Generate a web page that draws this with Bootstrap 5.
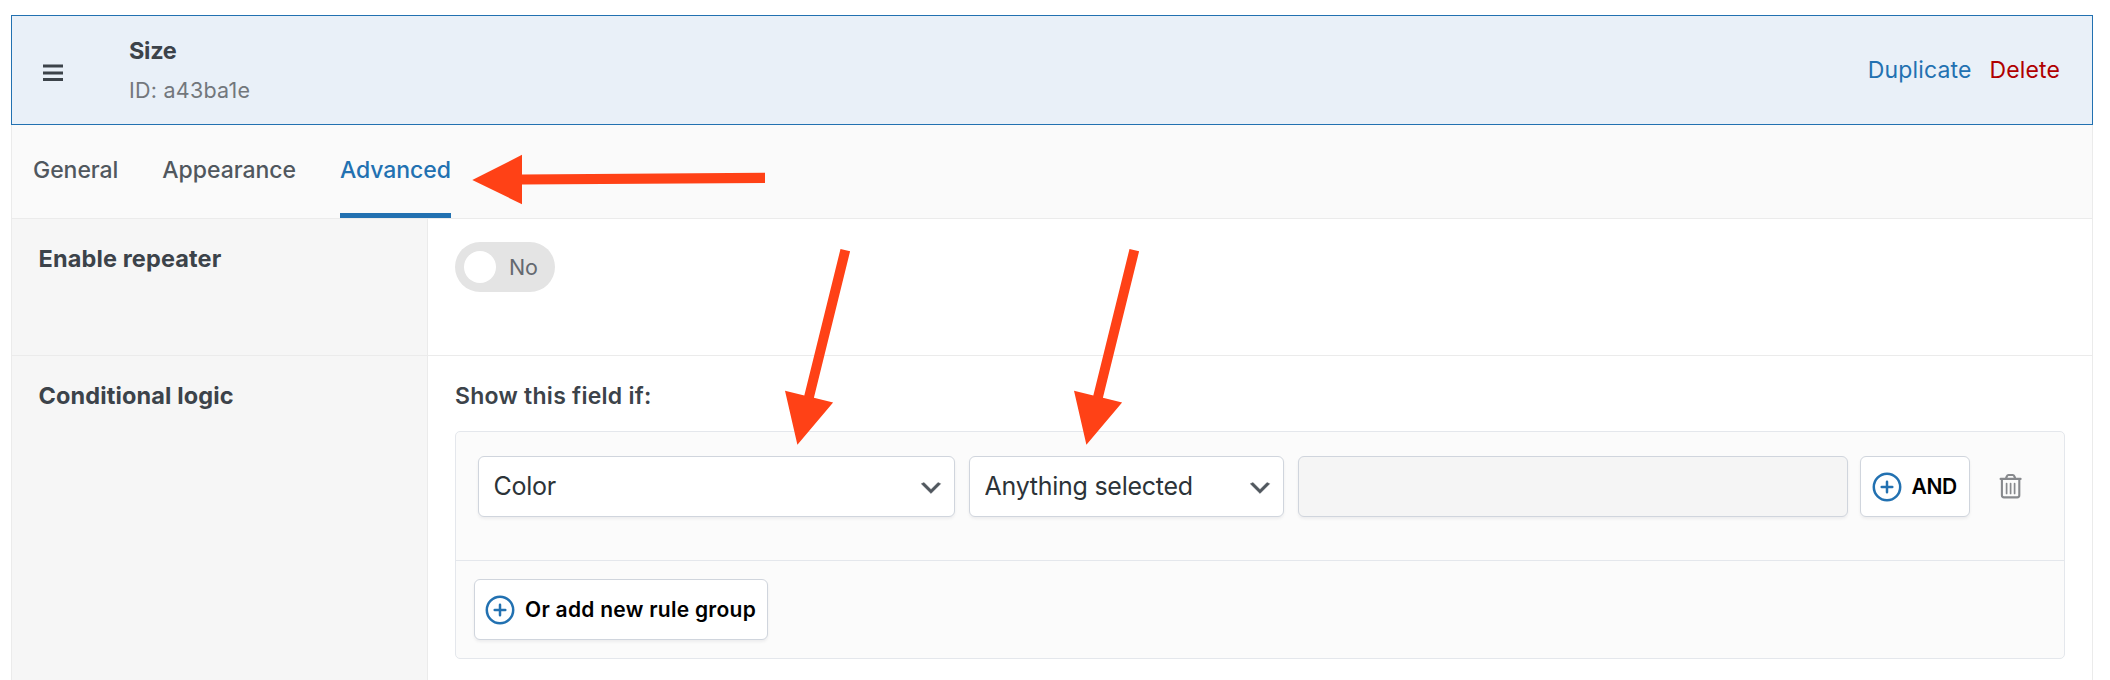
<!DOCTYPE html>
<html lang="en">
<head>
<meta charset="utf-8">
<meta name="viewport" content="width=device-width, initial-scale=1">
<title>Field settings</title>
<link href="https://cdn.jsdelivr.net/npm/bootstrap@5.3.0/dist/css/bootstrap.min.css" rel="stylesheet">
<style>
  :root { --blue: #2271b1; --line: #ebebeb; --field-line: #d0d5dd; --ink: #3c434a; }
  body { font-family: Inter, "Liberation Sans", sans-serif; font-size: 23px; line-height: 40px; color: var(--ink); background: #fff; }
  .page { height: 680px; padding: 15px 17px 0 11px; }
  .field-head { height: 110px; border: 1px solid var(--blue); background: #e9f0f8; padding: 0 32px 0 31px; }
  .handle { margin: 6px 64px 0 0; }
  .field-title { padding-top: 1px; margin-bottom: -1px; font-size: 23.5px; font-weight: 700; letter-spacing: -.3px; }
  .field-id { font-size: 21.5px; letter-spacing: .24px; color: #72777c; }
  .actions { gap: 18px; }
  .actions a { letter-spacing: .14px; color: var(--blue); }
  .actions a.remove { color: #b00000; }
  .field-body { border: solid var(--line); border-width: 0 1px; }
  .tab-bar { height: 94px; padding: 25px 21px 0; gap: 44px; background: #fafafa; border-bottom: 1px solid var(--line); }
  .tab-bar .nav-link { height: 68px; padding: 0; font-weight: 500; letter-spacing: -.05px; color: #50575e; border-bottom: 5px solid transparent; }
  .tab-bar .nav-link.active { color: var(--blue); border-color: var(--blue); }
  .setting-label { width: 416px; flex: none; padding: 20px 26.5px; background: #f6f6f6; border-right: 1px solid var(--line); font-size: 23.5px; font-weight: 700; letter-spacing: .13px; }
  .repeater { height: 137px; border-bottom: 1px solid var(--line); }
  .setting-value { padding: 20px 27px; }
  .toggle { width: 100px; height: 50px; margin-top: 3px; padding: 0 17px 0 9px; border-radius: 25px; background: #e4e4e4; font-size: 21.5px; color: #646970; }
  .knob { width: 32px; height: 32px; background: #fff; }
  .rules-title { font-weight: 600; letter-spacing: .26px; }
  .rules { margin-top: 15px; height: 228px; border: 1px solid #e4e7ec; border-radius: 5px; background: #fbfbfb; }
  .rule { height: 129px; padding: 24px 22px 0; border-bottom: 1px solid #e4e7ec; }
  .rule-or { padding: 18px; }
  .rule .form-select, .rule .form-control, .rule-btn { height: 61px; border: 1px solid var(--field-line); border-radius: 6px; box-shadow: 0 2px 3px rgba(16,24,40,.06); }
  .rule .form-select { flex: none; padding: 0 40px 1px 14.5px; font-size: 25px; line-height: 40px; letter-spacing: -.26px; color: #2c3338; background: #fff url("data:image/svg+xml,%3Csvg xmlns='http://www.w3.org/2000/svg' viewBox='0 0 20 20'%3E%3Cpath fill='%2350575e' stroke='%2350575e' stroke-width='.25' d='M5 6l5 5 5-5 2 1-7 7-7-7 2-1z'/%3E%3C/svg%3E") no-repeat right 9px top 17px / 28px 28px; }
  .source { width: 477px; }
  .compare { width: 315px; margin: 0 14px; }
  .rule .form-control { width: 550px; background: #f5f5f5; }
  .rule-btn { display: flex; align-items: center; padding: 0 0 0 9.5px; font-size: 21px; font-weight: 600; color: #000; background: #fff; white-space: nowrap; }
  .rule-btn span { margin-left: 9px; }
  .add-and { width: 110px; margin: 0 29px 0 12px; letter-spacing: -.4px; }
  .add-group { width: 294px; padding-left: 8.5px; letter-spacing: .27px; }
  .add-group span { margin-left: 9.5px; }
  .pointers { position: absolute; left: 0; top: 0; pointer-events: none; }
</style>
</head>
<body class="overflow-hidden">
<main class="page d-flex flex-column position-relative">
  <header class="field-head d-flex align-items-center flex-shrink-0">
    <svg class="handle" width="22" height="18" fill="#3c434a"><path d="M0 .6h20v3H0zM0 7.4h20v3H0zM0 14.1h20v3H0z"/></svg>
    <div>
      <div class="field-title">Size</div>
      <div class="field-id">ID: a43ba1e</div>
    </div>
    <div class="actions d-flex ms-auto">
      <a class="text-decoration-none" href="#">Duplicate</a>
      <a class="remove text-decoration-none" href="#">Delete</a>
    </div>
  </header>

  <section class="field-body d-flex flex-column flex-grow-1">
    <nav class="tab-bar nav flex-shrink-0">
      <a class="nav-link" href="#">General</a>
      <a class="nav-link" href="#">Appearance</a>
      <a class="nav-link active" href="#">Advanced</a>
    </nav>

    <div class="repeater d-flex flex-shrink-0">
      <div class="setting-label">Enable repeater</div>
      <div class="setting-value">
        <div class="toggle d-flex align-items-center justify-content-between"><span class="knob rounded-circle"></span>No</div>
      </div>
    </div>

    <div class="d-flex flex-grow-1">
      <div class="setting-label">Conditional logic</div>
      <div class="setting-value flex-grow-1">
        <div class="rules-title">Show this field if:</div>
        <div class="rules">
          <div class="rule d-flex">
            <select class="form-select source" aria-label="Field"><option>Color</option></select>
            <select class="form-select compare" aria-label="Condition"><option>Anything selected</option></select>
            <input class="form-control" type="text" aria-label="Value" disabled>
            <button class="btn rule-btn add-and" type="button">
              <svg width="32" height="32" fill="none" stroke="#2271b1" stroke-width="2.5"><circle cx="16" cy="16" r="13.2"/><path d="M10.7 16h10.6M16 10.7v10.6" stroke-linecap="round"/></svg><span>AND</span>
            </button>
            <svg class="mt-3" width="24" height="28" fill="none" stroke="#87898d" stroke-width="2.1" stroke-linejoin="round" stroke-linecap="round"><path d="M1.6 6.9h20M7 6.2l1-2.2q.4-1 1.4-1h4.4q1 0 1.4 1l1 2.2M2.9 7.3v16q0 2.1 2.1 2.1h13.2q2.1 0 2.1-2.1v-16"/><path d="M7.6 11.6v9.8M11.6 11.6v9.8M15.6 11.6v9.8" stroke-width="1.7"/></svg>
          </div>
          <div class="rule-or">
            <button class="btn rule-btn add-group" type="button">
              <svg width="32" height="32" fill="none" stroke="#2271b1" stroke-width="2.5"><circle cx="16" cy="16" r="13.2"/><path d="M10.7 16h10.6M16 10.7v10.6" stroke-linecap="round"/></svg><span>Or add new rule group</span>
            </button>
          </div>
        </div>
      </div>
    </div>
  </section>

  <!-- Callout arrows over the tab and the two selects -->
  <svg class="pointers" width="2110" height="680" fill="#ff4116">
    <path d="M472.3 180 522 154.8v19.7l243-1.7v10.1l-243 1.6v19.7z"/>
    <path id="down" d="M797.4 444.7 785 390.7l19.3 4.7L840.5 249l9.6 2.3-36.2 146.5 19.2 4.7z"/>
    <use href="#down" x="289"/>
  </svg>
</main>
<script src="https://cdn.jsdelivr.net/npm/bootstrap@5.3.0/dist/js/bootstrap.bundle.min.js"></script>
</body>
</html>
